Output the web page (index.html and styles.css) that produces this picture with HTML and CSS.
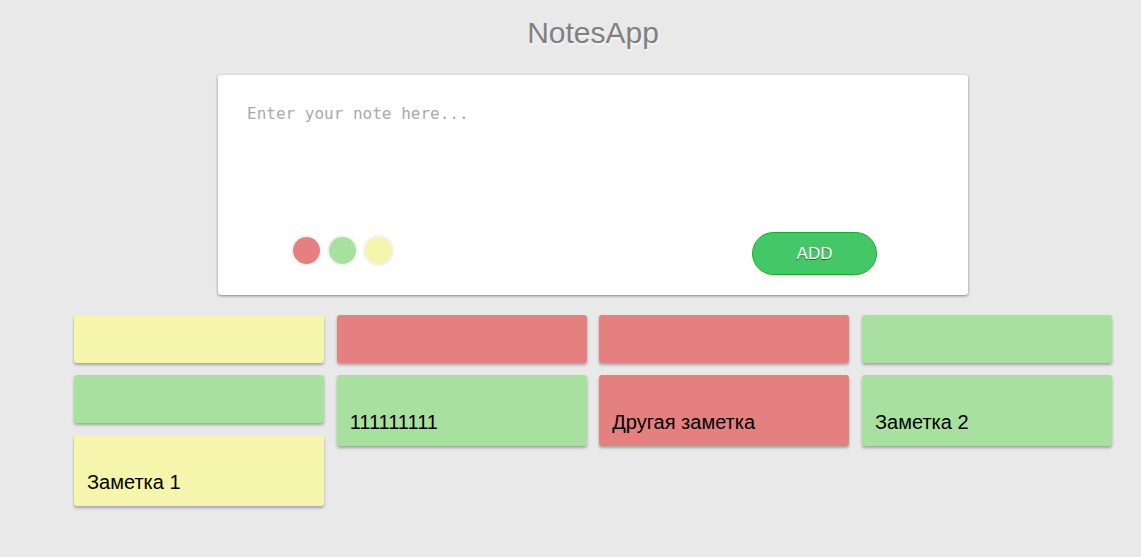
FILE: index.html
```html
<!DOCTYPE html>
<html lang="en">
<head>
<meta charset="utf-8">
<title>NotesApp</title>
<meta name="viewport" content="width=device-width, initial-scale=1">
<link rel="stylesheet" href="styles.css">
</head>
<body>
<main class="app">
  <h1 class="title">NotesApp</h1>
  <form class="editor">
    <textarea class="editor-text" placeholder="Enter your note here..." aria-label="Note text"></textarea>
    <div class="editor-bar">
      <div class="colors" role="radiogroup" aria-label="Note color">
        <input class="color red" type="radio" name="color" value="red" aria-label="Red">
        <input class="color green" type="radio" name="color" value="green" aria-label="Green">
        <input class="color yellow" type="radio" name="color" value="yellow" aria-label="Yellow">
      </div>
      <button class="add" type="button">ADD</button>
    </div>
  </form>
  <section class="notes" aria-label="Notes">
    <div class="column">
      <article class="note yellow"></article>
      <article class="note green"></article>
      <article class="note yellow"><p class="note-text">Заметка 1</p></article>
    </div>
    <div class="column">
      <article class="note red"></article>
      <article class="note green"><p class="note-text">111111111</p></article>
    </div>
    <div class="column">
      <article class="note red"></article>
      <article class="note red"><p class="note-text">Другая заметка</p></article>
    </div>
    <div class="column">
      <article class="note green"></article>
      <article class="note green"><p class="note-text">Заметка 2</p></article>
    </div>
  </section>
</main>
</body>
</html>
```
FILE: styles.css
```css
* {
  box-sizing: border-box;
}

body {
  margin: 0;
  background: #e9e9e9;
  font-family: "Liberation Sans", Arial, sans-serif;
  color: #000;
}

.app {
  display: flex;
  flex-direction: column;
  align-items: center;
  padding: 15px 29px 50px 74px;
}

.title {
  margin: 0 0 24px;
  font-size: 30px;
  line-height: 36px;
  font-weight: 400;
  color: #808080;
  text-shadow: 1px 2px 2px rgba(255, 255, 255, 0.6);
}

.editor {
  width: 100%;
  max-width: 750px;
  margin-bottom: 20px;
  padding: 29px 29px 20px;
  background: #fff;
  border-radius: 3px;
  box-shadow: 0 1px 3px rgba(0, 0, 0, 0.45);
}

.editor-text {
  display: block;
  width: 100%;
  height: 116px;
  margin-bottom: 12px;
  padding: 0;
  border: 0;
  outline: 0;
  resize: none;
  background: transparent;
  font-family: Consolas, "DejaVu Sans Mono", monospace;
  font-size: 16px;
  line-height: 20px;
}

.editor-text::placeholder {
  color: #a9a9a9;
  opacity: 1;
}

.editor-bar {
  display: flex;
  justify-content: space-between;
  align-items: flex-start;
  padding: 0 62px 0 46px;
}

.colors {
  display: flex;
  gap: 9px;
  padding-top: 5px;
}

.color {
  appearance: none;
  width: 27px;
  height: 27px;
  margin: 0;
  border-radius: 50%;
  box-shadow: 0 0 0 2px #f3f3f5;
  cursor: pointer;
}

.add {
  width: 125px;
  height: 43px;
  padding: 0;
  border: 1px solid #18ab29;
  border-radius: 28px;
  background: #44c767;
  color: #fff;
  font-family: inherit;
  font-size: 17px;
  text-shadow: 0 1px 0 #2f6627;
  cursor: pointer;
}

.notes {
  display: flex;
  flex-wrap: wrap;
  justify-content: space-between;
  width: 100%;
  gap: 12px;
}

.column {
  display: flex;
  flex-direction: column;
  gap: 12px;
  width: 250px;
}

.note {
  min-height: 48px;
  padding: 35px 13px 12px;
  border-radius: 3px;
  box-shadow: 0 2px 3px rgba(0, 0, 0, 0.3);
}

.note-text {
  margin: 0;
  font-size: 20px;
  line-height: 24px;
}

.red {
  background: #e48080;
}

.green {
  background: #a8e0a0;
}

.yellow {
  background: #f5f5ad;
}
```
